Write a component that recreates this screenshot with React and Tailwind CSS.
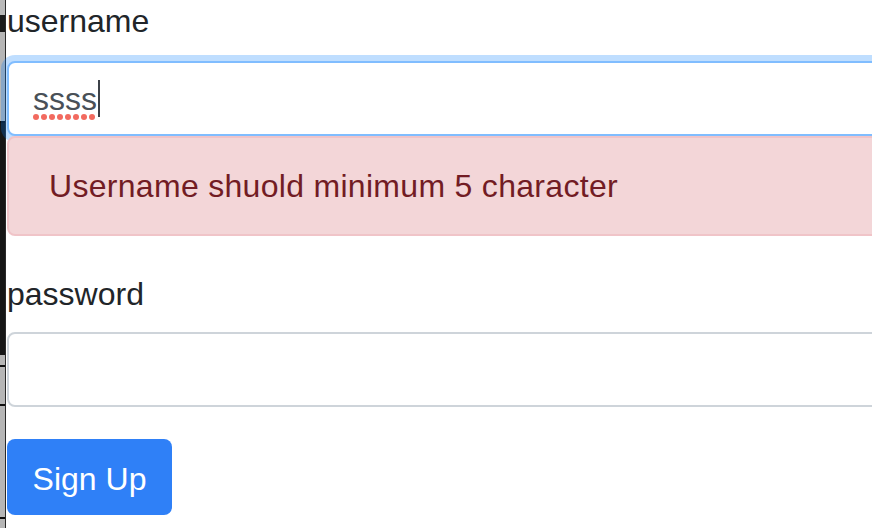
import React from 'react';

const font = { fontFamily: '"Liberation Sans", Arial, sans-serif' };

const EdgeStrip = () => (
  <div className="w-[6px] shrink-0 flex flex-col border-r border-[#2a2a2a]">
    <div className="h-[15px] bg-[#b9b9b9]" />
    <div className="h-[17px] bg-[#1b1b1b]" />
    <div className="h-[89px] bg-[#b6b6b6]" />
    <div className="h-[2px] bg-[#0e0e0e]" />
    <div className="h-[232px] bg-[#161616]" />
    <div className="h-[10px] bg-[#b6b6b6]" />
    <div className="h-[2px] bg-[#0e0e0e]" />
    <div className="h-[37px] bg-[#b6b6b6]" />
    <div className="h-[2px] bg-[#0e0e0e]" />
    <div className="h-[111px] bg-[#b6b6b6]" />
    <div className="h-[2px] bg-[#0e0e0e]" />
    <div className="flex-1 bg-[#b6b6b6]" />
  </div>
);

const App = () => {
  return (
    <div className="w-[872px] h-[528px] overflow-hidden bg-white flex" style={font}>
      <EdgeStrip />
      <div className="w-[900px] shrink-0 pl-px">
        <div className="-mt-[3px] mb-4 text-[32px] leading-[48px] text-[#212529]">username</div>
        <div className="h-[75px] border-2 border-[#80bdff] rounded-[8px] bg-white shadow-[0_0_0_6px_rgba(0,123,255,0.25)] px-6 py-3 flex items-center">
          <span className="relative text-[32px] leading-[48px] text-[#495057]">
            ssss
            <span className="absolute left-0 top-[39px] flex gap-[2px]">
              {Array.from({ length: 8 }).map((_, i) => (
                <span key={i} className="w-[6px] h-[6px] rounded-full bg-[#f26a5f]" />
              ))}
            </span>
          </span>
          <span className="ml-[1px] w-[2px] h-[37px] bg-[#3c4148]" />
        </div>
        <div className="h-[100px] border-2 border-[#f0c4c8] bg-[#f3d6d8] rounded-[8px] px-10 py-6 text-[32px] leading-[48px] text-[#721c24] tracking-[0.3px] flex items-center">
          Username shuold minimum 5 character
        </div>
        <div className="mt-[34px] mb-[14px] text-[32px] leading-[48px] text-[#212529]">password</div>
        <div className="h-[75px] border-2 border-[#ced4da] rounded-[8px] bg-white" />
        <button className="mt-8 h-[76px] w-[165px] border-2 border-transparent rounded-[8px] bg-[#2f80f7] pt-[3px] text-white text-[32px] leading-[48px]">
          Sign Up
        </button>
      </div>
    </div>
  );
};

export default App;
